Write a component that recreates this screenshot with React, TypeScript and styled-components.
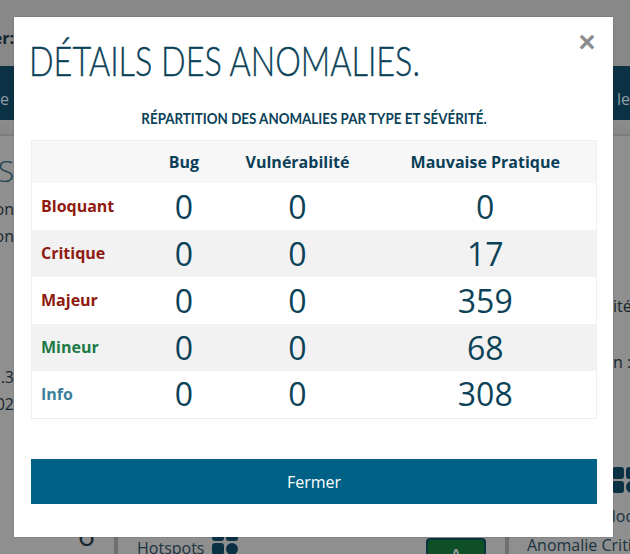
import styled, { createGlobalStyle } from "styled-components";

const GlobalStyle = createGlobalStyle`
  html, body {
    margin: 0;
    padding: 0;
    width: 630px;
    height: 554px;
    overflow: hidden;
    background: #8f8f8f;
    font-family: "Open Sans", "Liberation Sans", sans-serif;
  }
`;

const Page = styled.div`
  width: 630px;
  height: 554px;
  overflow: hidden;
  position: relative;
  color: #16262e;
`;

const TopBar = styled.div`
  height: 66px;
  background: #888888;
  padding-top: 27px;
  box-sizing: border-box;
  font-size: 16px;
  line-height: 22px;
  font-weight: 700;
  color: #13242c;
`;

const TopLabel = styled.div`
  width: 14px;
  display: flex;
  justify-content: flex-end;
  white-space: nowrap;
`;

const Nav = styled.div`
  height: 54px;
  background: #0b3144;
  display: flex;
  justify-content: space-between;
  align-items: center;
  font-size: 16px;
  color: #8f9ca3;
`;

const NavEdge = styled.span`
  white-space: nowrap;
  padding-top: 12px;
  line-height: 22px;
`;

const Band = styled.div`
  height: 16px;
  background: linear-gradient(#8c8c8c, #878787 85%, #767676);
`;

const Middle = styled.div`
  height: 332px;
  display: flex;
  justify-content: space-between;
`;

const LeftStrip = styled.div`
  width: 14px;
  overflow: hidden;
  display: flex;
  flex-direction: column;
  align-items: flex-end;
`;

const RightStrip = styled.div`
  width: 17px;
  overflow: hidden;
  display: flex;
  flex-direction: column;
`;

const Heading = styled.span`
  font-size: 30px;
  font-weight: 300;
  line-height: 36px;
  margin-top: 17px;
  color: #23424f;
`;

const StripLine = styled.span<{ $top: number }>`
  font-size: 16px;
  line-height: 22px;
  margin-top: ${(p) => p.$top}px;
  white-space: nowrap;
`;

const Lower = styled.div`
  height: 86px;
  display: grid;
  grid-template-columns: 114px 391px 125px;
  font-size: 16px;
  line-height: 22px;
`;

const LeftCell = styled.div`
  display: flex;
  justify-content: flex-end;
  padding: 52px 19px 0 0;
  font-size: 30px;
  line-height: 30px;
  color: #16262e;
`;

const MiddleCell = styled.div`
  border-left: 4px solid #6f6f6f;
  padding: 69px 0 0 19px;
  display: flex;
  justify-content: space-between;
`;

const Hotspot = styled.div`
  display: flex;
  gap: 7px;
  align-items: flex-start;
  color: #1a3340;
  white-space: nowrap;
`;

const HotspotIcon = styled.span`
  display: block;
  margin-top: -8px;
`;

const Grade = styled.div`
  width: 56px;
  height: 30px;
  margin: 1px 19px 0 0;
  background: #0e4f26;
  border: 2px solid #0b3144;
  border-radius: 4px;
  text-align: center;
  color: #8f9ca3;
  font-weight: 600;
  line-height: 30px;
  font-size: 18px;
`;

const RightCell = styled.div`
  border-left: 4px solid #6f6f6f;
  padding-left: 18px;
  white-space: nowrap;
  color: #1a3340;
  position: relative;
`;

const RightLines = styled.div`
  padding-top: 37px;
  display: flex;
  flex-direction: column;
  gap: 7px;
`;

const Backdrop = styled.div`
  position: absolute;
  top: 17px;
  left: 14px;
  width: 599px;
  height: 520px;
  box-sizing: border-box;
  background: #ffffff;
  box-shadow: 0 0 1px rgba(0, 0, 0, 0.4);
  padding: 0 16px 0 17px;
`;

const CloseButton = styled.button`
  position: absolute;
  top: 11px;
  right: 16px;
  width: 20px;
  height: 28px;
  padding: 0;
  border: 0;
  background: none;
  color: #8a8a8a;
  font-family: "Liberation Sans", sans-serif;
  font-weight: 700;
  font-size: 29px;
  line-height: 28px;
`;

const Title = styled.h1`
  margin: 0 0 0 -2px;
  padding-top: 22px;
  height: 70px;
  box-sizing: border-box;
  font-family: "Lato", sans-serif;
  font-weight: 300;
  font-size: 41px;
  line-height: 44px;
  color: #0b4258;
  -webkit-text-stroke: 0.4px #0b4258;
  white-space: nowrap;
  transform: scaleX(0.79);
  transform-origin: left top;
`;

const Subtitle = styled.h2`
  margin: 20px 0 0;
  height: 22px;
  font-family: "Lato", sans-serif;
  font-weight: 700;
  font-size: 16px;
  line-height: 22px;
  color: #0b4258;
  text-align: center;
  white-space: nowrap;
  transform: scaleX(0.835);
  transform-origin: center top;
`;

const Table = styled.table`
  margin-top: 11px;
  width: 565px;
  border-collapse: collapse;
  table-layout: fixed;
  border: 1px solid #eeeeee;
`;

const Head = styled.th`
  height: 42px;
  padding: 0;
  background: #f7f7f7;
  color: #0b3f58;
  font-size: 16px;
  font-weight: 700;
  text-align: center;
`;

const Row = styled.tr<{ $striped: boolean }>`
  height: 47px;
  background: ${(p) => (p.$striped ? "#f2f2f2" : "#ffffff")};
`;

const Label = styled.td<{ $color: string }>`
  padding: 0 0 1px 9px;
  font-size: 16px;
  font-weight: 700;
  color: ${(p) => p.$color};
`;

const Count = styled.td`
  padding: 0;
  text-align: center;
  font-size: 32px;
  line-height: 40px;
  color: #0b4258;
`;

const CloseBar = styled.button`
  display: block;
  width: 566px;
  height: 45px;
  margin-top: 40px;
  padding: 2px 0 0;
  border: 0;
  background: #006186;
  color: #ffffff;
  font-family: "Open Sans", sans-serif;
  font-size: 16px;
`;

const GridIcon = ({ size = 26 }: { size?: number }) => (
  <svg width={size} height={size} viewBox="0 0 26 26" fill="#0b3144">
    <rect x="0" y="0" width="12" height="12" rx="3" />
    <rect x="14" y="0" width="12" height="12" rx="3" />
    <rect x="0" y="14" width="12" height="12" rx="3" />
    <rect x="14" y="14" width="12" height="12" rx="6" />
  </svg>
);

const IconSlot = styled.div`
  position: absolute;
  top: -1px;
  left: 103px;
`;

const rows = [
  { name: "Bloquant", color: "#8f1a10", bug: 0, vuln: 0, bad: 0 },
  { name: "Critique", color: "#8f1a10", bug: 0, vuln: 0, bad: 17 },
  { name: "Majeur", color: "#8f1a10", bug: 0, vuln: 0, bad: 359 },
  { name: "Mineur", color: "#1a7a45", bug: 0, vuln: 0, bad: 68 },
  { name: "Info", color: "#3b7f9c", bug: 0, vuln: 0, bad: 308 },
];

export default function App() {
  return (
    <>
      <GlobalStyle />
      <Page>
        <TopBar>
          <TopLabel>er:</TopLabel>
        </TopBar>
        <Nav>
          <NavEdge>e</NavEdge>
          <NavEdge>le</NavEdge>
        </Nav>
        <Band />
        <Middle>
          <LeftStrip>
            <Heading>S</Heading>
            <StripLine $top={9}>on</StripLine>
            <StripLine $top={5}>on</StripLine>
            <StripLine $top={119}>.3</StripLine>
            <StripLine $top={5}>02</StripLine>
          </LeftStrip>
          <RightStrip>
            <StripLine $top={159}>ité</StripLine>
            <StripLine $top={34}>n :</StripLine>
          </RightStrip>
        </Middle>
        <Lower>
          <LeftCell>6</LeftCell>
          <MiddleCell>
            <Hotspot>
              Hotspots
              <HotspotIcon>
                <GridIcon />
              </HotspotIcon>
            </Hotspot>
            <Grade>A</Grade>
          </MiddleCell>
          <RightCell>
            <IconSlot>
              <GridIcon />
            </IconSlot>
            <RightLines>
              <span>Anomalie Bloquante</span>
              <span>Anomalie Critique</span>
            </RightLines>
          </RightCell>
        </Lower>
        <Backdrop>
          <CloseButton>×</CloseButton>
          <Title>DÉTAILS DES ANOMALIES.</Title>
          <Subtitle>RÉPARTITION DES ANOMALIES PAR TYPE ET SÉVÉRITÉ.</Subtitle>
          <Table>
            <colgroup>
              <col style={{ width: 116 }} />
              <col style={{ width: 73 }} />
              <col style={{ width: 154 }} />
              <col style={{ width: 222 }} />
            </colgroup>
            <thead>
              <tr>
                <Head />
                <Head>Bug</Head>
                <Head>Vulnérabilité</Head>
                <Head>Mauvaise Pratique</Head>
              </tr>
            </thead>
            <tbody>
              {rows.map((r, i) => (
                <Row key={r.name} $striped={i % 2 === 1}>
                  <Label $color={r.color}>{r.name}</Label>
                  <Count>{r.bug}</Count>
                  <Count>{r.vuln}</Count>
                  <Count>{r.bad}</Count>
                </Row>
              ))}
            </tbody>
          </Table>
          <CloseBar>Fermer</CloseBar>
        </Backdrop>
      </Page>
    </>
  );
}
